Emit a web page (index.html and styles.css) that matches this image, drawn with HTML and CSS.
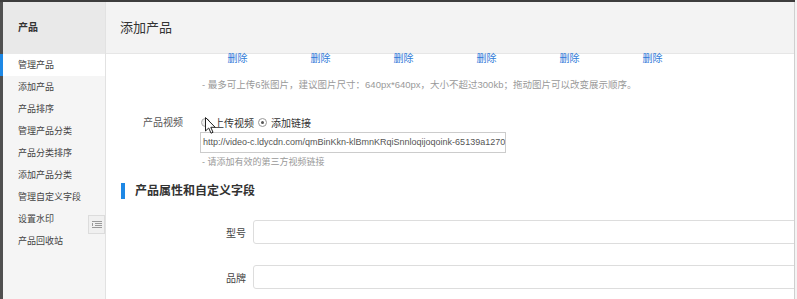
FILE: index.html
```html
<!DOCTYPE html>
<html lang="zh-CN">

<head>
    <meta charset="UTF-8">
    <meta name="viewport" content="width=device-width, initial-scale=1.0">
    <title>添加产品</title>
    <link rel="stylesheet" href="styles.css">
</head>

<body>
    <div class="page">
        <!-- 左侧菜单 -->
        <div class="side">
            <div class="side-head">产品</div>
            <ul class="menu">
                <li class="active">管理产品</li>
                <li>添加产品</li>
                <li>产品排序</li>
                <li>管理产品分类</li>
                <li>产品分类排序</li>
                <li>添加产品分类</li>
                <li>管理自定义字段</li>
                <li>设置水印</li>
                <li>产品回收站</li>
            </ul>
            <span class="fold">
                <svg width="10" height="8" viewBox="0 0 10 8">
                    <path d="M0 0.5h10M3 2.5h7M3 4.5h7M0 6.5h10M0.5 2v3" stroke="#999" stroke-width="1" fill="none"/>
                </svg>
            </span>
        </div>

        <!-- 右侧内容 -->
        <div class="main">
            <div class="main-head">添加产品</div>
            <div class="content">
                <div class="del-row">
                    <a>删除</a><a>删除</a><a>删除</a><a>删除</a><a>删除</a><a>删除</a>
                </div>
                <p class="tip tip-pic">- 最多可上传6张图片，建议图片尺寸：640px*640px，大小不超过300kb；拖动图片可以改变展示顺序。</p>

                <div class="video">
                    <label class="video-label">产品视频</label>
                    <div class="video-box">
                        <div class="radios">
                            <span class="radio"></span>上传视频
                            <span class="radio checked"></span>添加链接
                        </div>
                        <div class="url">http://video-c.ldycdn.com/qmBinKkn-klBmnKRqiSnnloqijoqoink-65139a12708</div>
                        <p class="tip tip-url">- 请添加有效的第三方视频链接</p>
                    </div>
                    <!-- 鼠标指针 -->
                    <svg class="cursor" width="11" height="17" viewBox="0 0 11 17">
                        <path d="M0.5 0.5v13.5l3.2-3 2.3 5.2 2-0.9-2.2-5h4.4z" fill="#fff" stroke="#222" stroke-width="1"/>
                    </svg>
                </div>

                <h3 class="sec-title">产品属性和自定义字段</h3>

                <div class="field">
                    <label>型号</label>
                    <div class="ipt"></div>
                </div>
                <div class="field">
                    <label>品牌</label>
                    <div class="ipt"></div>
                </div>
            </div>
        </div>
    </div>
</body>

</html>
```

FILE: styles.css
```css
* {
    box-sizing: border-box;
}
body {
    margin: 0;
    background: #f4f4f4;
    font-family: "Liberation Sans", "Noto Sans CJK SC", sans-serif;
    color: #333;
}
.page {
    display: flex;
    width: 795px;
    height: 299px;
    border-top: 2px solid #3d3d3d;
    overflow: hidden;
}
/* 左侧菜单 */
.side {
    position: relative;
    width: 106px;
    flex: none;
    background: #f5f5f5;
    border-left: 3px solid #505050;
    border-right: 1px solid #e2e2e2;
}
.side-head {
    height: 52px;
    line-height: 52px;
    padding-left: 15px;
    background: #e9e9e9;
    font-size: 10px;
    font-weight: bold;
    color: #333;
}
ul {
    margin: 0;
    padding: 0;
    list-style: none;
}
.menu li {
    height: 22px;
    line-height: 23px;
    padding-left: 15px;
    font-size: 9px;
    color: #444;
}
.menu li.active {
    margin-left: -3px;
    padding-left: 15px;
    background: #fff;
    border-left: 3px solid #1e88e5;
}
.fold {
    position: absolute;
    left: 85px;
    top: 213px;
    width: 17px;
    height: 19px;
    display: flex;
    align-items: center;
    justify-content: center;
    background: #f0f0f0;
    border: 1px solid #dcdcdc;
}
/* 右侧 */
.main {
    flex: 1;
    background: #fff;
    border-right: 1px solid #cfcfcf;
    overflow: hidden;
}
.main-head {
    height: 52px;
    line-height: 52px;
    padding-left: 14px;
    background: #f3f3f3;
    border-bottom: 1px solid #e6e6e6;
    font-size: 13px;
    color: #333;
}
.content {
    position: relative;
}
.del-row {
    display: flex;
    padding-left: 90px;
    line-height: 10px;
    height: 10px;
}
.del-row a {
    width: 83px;
    text-align: center;
    font-size: 10px;
    color: #2f7ad8;
}
.tip {
    margin: 0;
    font-size: 9px;
    line-height: 14px;
    color: #999;
}
.tip-pic {
    margin-top: 14px;
    padding-left: 96px;
    font-size: 9.5px;
}
.video {
    position: relative;
    display: flex;
    margin-top: 23px;
}
.video-label {
    width: 94px;
    padding-right: 17px;
    text-align: right;
    font-size: 10px;
    line-height: 15px;
    color: #555;
}
.radios {
    display: flex;
    align-items: center;
    height: 14px;
    font-size: 10px;
    color: #333;
}
.radio {
    width: 9px;
    height: 9px;
    margin: 0 4px 0 1px;
    border: 1px solid #aaa;
    border-radius: 50%;
    background: #eee;
}
.radio.checked {
    margin-left: 4px;
    background: #fff;
    border-color: #999;
    position: relative;
}
.radio.checked::after {
    content: "";
    position: absolute;
    left: 2px;
    top: 2px;
    width: 3px;
    height: 3px;
    border-radius: 50%;
    background: #555;
}
.url {
    width: 306px;
    height: 21px;
    margin-top: 3px;
    padding-left: 2px;
    line-height: 19px;
    border: 1px solid #ccc;
    font-size: 9px;
    color: #555;
    white-space: nowrap;
    overflow: hidden;
}
.tip-url {
    margin-top: 2px;
    padding-left: 2px;
}
.cursor {
    position: absolute;
    left: 99px;
    top: 2px;
}
.sec-title {
    margin: 14px 0 0 15px;
    padding-left: 10px;
    height: 16px;
    line-height: 16px;
    border-left: 4px solid #1e88e5;
    font-size: 12px;
    font-weight: bold;
    color: #333;
}
.field {
    display: flex;
    align-items: center;
    margin-top: 21px;
}
.field label {
    width: 147px;
    flex: none;
    padding-right: 7px;
    text-align: right;
    font-size: 10px;
    color: #444;
}
.ipt {
    width: 560px;
    flex: none;
    height: 24px;
    border: 1px solid #ddd;
    border-radius: 3px;
}
```
